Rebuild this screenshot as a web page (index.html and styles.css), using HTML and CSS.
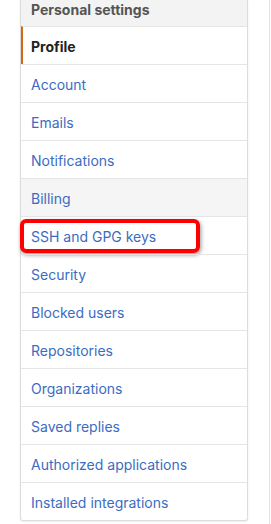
FILE: index.html
```html
<!DOCTYPE html>
<html lang="en">
<head>
    <meta charset="UTF-8">
    <meta name="viewport" content="width=device-width, initial-scale=1.0">
    <title>Personal settings</title>
    <link rel="stylesheet" href="styles.css">
</head>
<body>
    <div class="layout">
        <nav class="menu">
            <div class="menu-heading">Personal settings</div>
            <a class="menu-item selected" href="#">Profile</a>
            <a class="menu-item" href="#">Account</a>
            <a class="menu-item" href="#">Emails</a>
            <a class="menu-item" href="#">Notifications</a>
            <a class="menu-item hover" href="#">Billing</a>
            <a class="menu-item marked" href="#">SSH and GPG keys<span class="callout"></span></a>
            <a class="menu-item" href="#">Security</a>
            <a class="menu-item" href="#">Blocked users</a>
            <a class="menu-item" href="#">Repositories</a>
            <a class="menu-item" href="#">Organizations</a>
            <a class="menu-item" href="#">Saved replies</a>
            <a class="menu-item" href="#">Authorized applications</a>
            <a class="menu-item" href="#">Installed integrations</a>
        </nav>
        <div class="main"></div>
    </div>
</body>
</html>
```

FILE: styles.css
```css
body {
    margin: 0;
    background-color: white;
    font-family: Inter, "Liberation Sans", Arial, sans-serif;
    font-size: 14px;
}
.layout {
    display: flex;
    padding-left: 20px;
    height: 524px;
}
.menu {
    width: 228px;
    height: 521px;
    box-sizing: border-box;
    border: 1px solid #dcdcdc;
    border-top: none;
    border-radius: 0 0 3px 3px;
    box-shadow: 0 1px 2px rgba(0, 0, 0, 0.08);
    display: flex;
    flex-direction: column;
}
.menu-heading {
    height: 27px;
    box-sizing: border-box;
    line-height: 20px;
    padding-left: 10px;
    background-color: #f3f3f3;
    color: #555;
    font-weight: bold;
}
.menu-item {
    position: relative;
    display: block;
    height: 38px;
    box-sizing: border-box;
    padding-top: 2px;
    line-height: 35px;
    padding-left: 10px;
    border-top: 1px solid #e5e5e5;
    color: #3b6cc2;
    text-decoration: none;
}
.menu-item.selected {
    color: #222;
    font-weight: bold;
    border-left: 2px solid #d26911;
    padding-left: 8px;
}
.menu-item.hover {
    background-color: #f5f5f5;
}
.callout {
    position: absolute;
    top: 2px;
    left: -1px;
    width: 180px;
    height: 34px;
    box-sizing: border-box;
    border: 4px solid #f00;
    border-radius: 6px;
    box-shadow: 1px 2px 4px rgba(0, 0, 0, 0.4);
}
.main {
    margin-left: 21px;
    flex: 1;
    border-left: 1px solid #e1e1e1;
}
```
